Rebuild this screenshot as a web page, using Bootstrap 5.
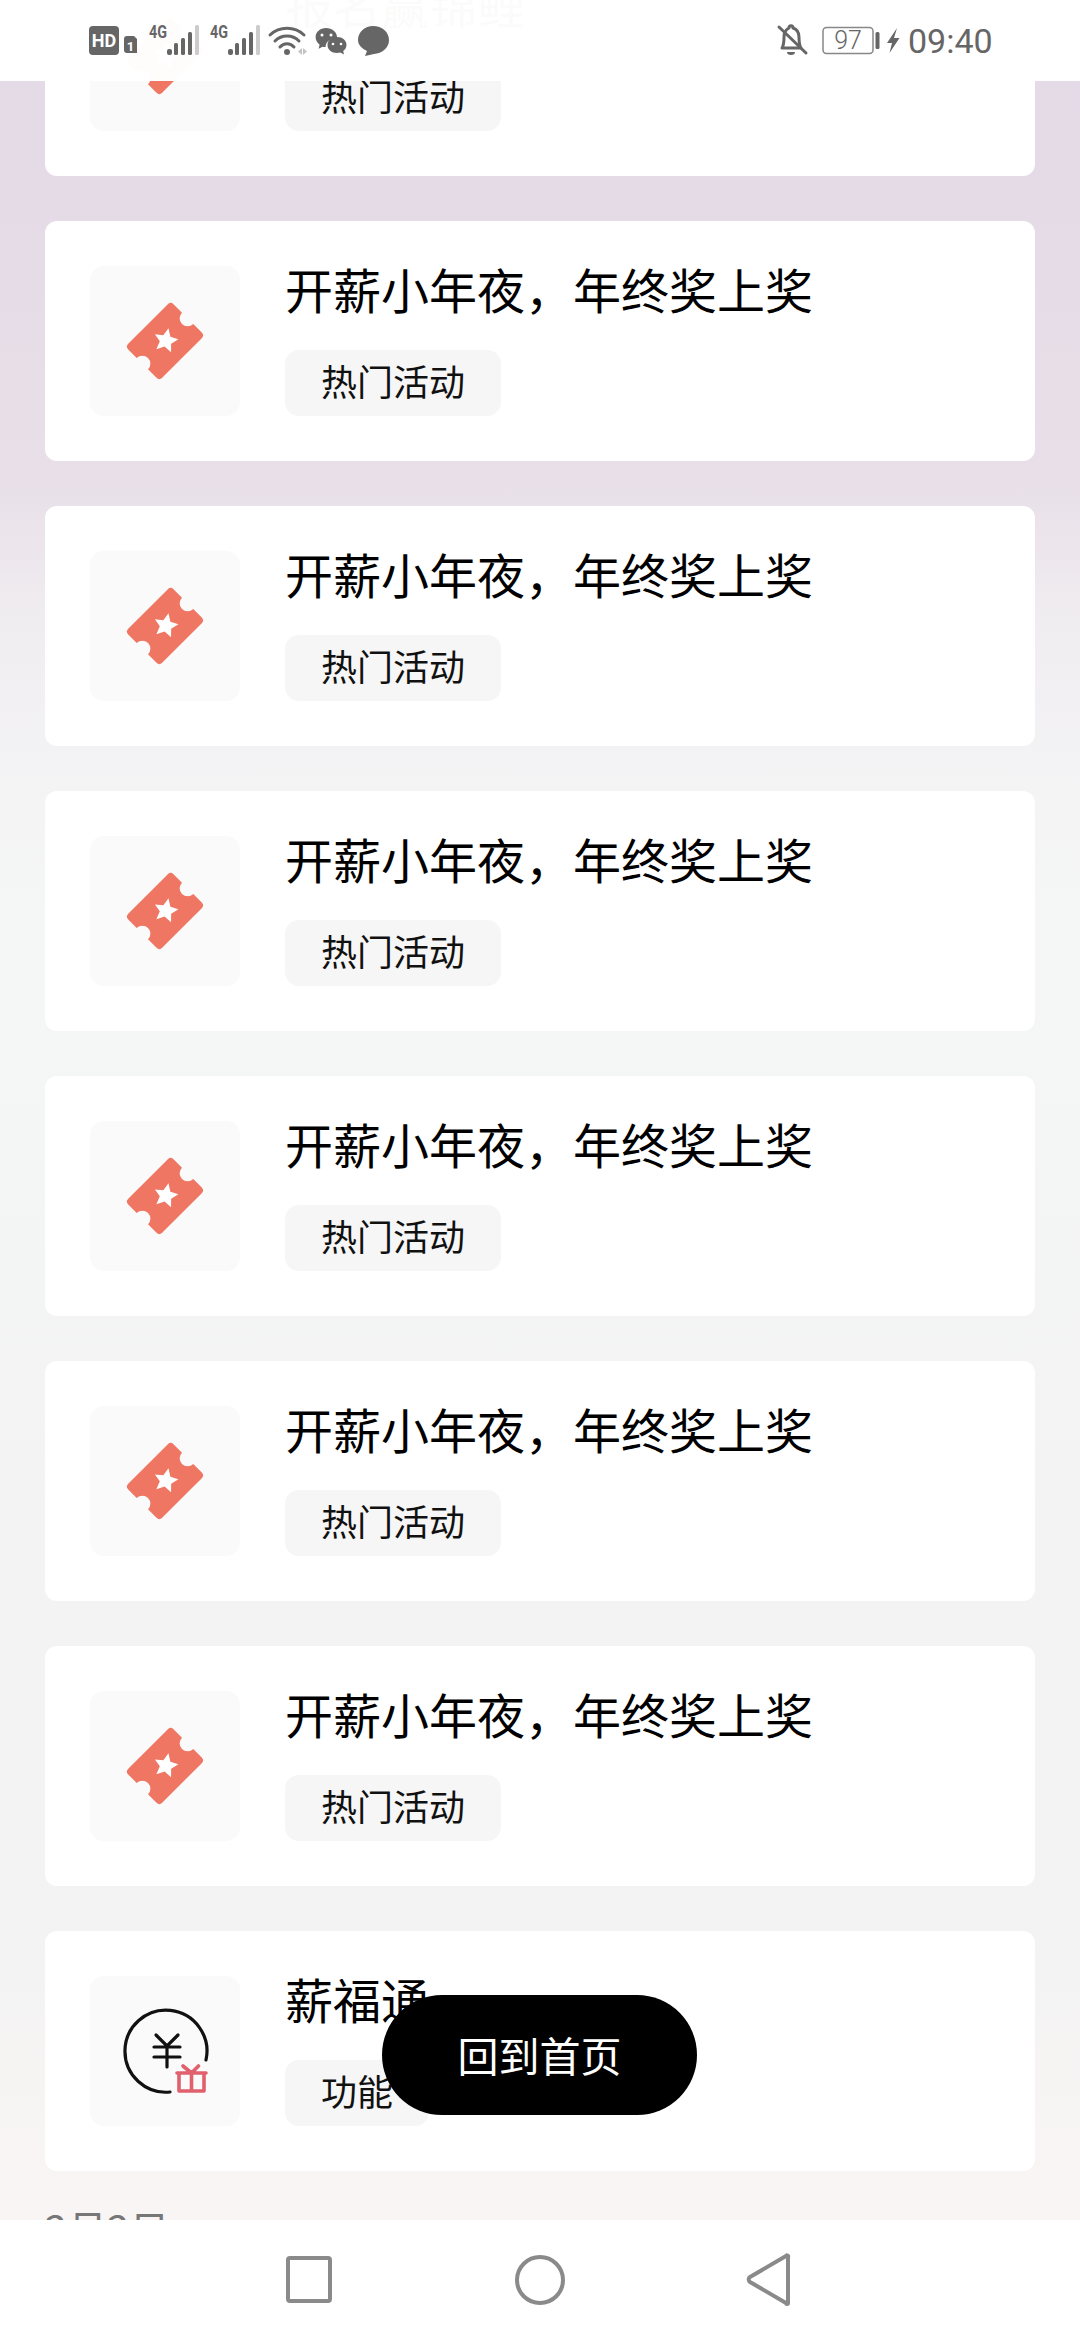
<!DOCTYPE html>
<html lang="zh-CN">
<head>
  <meta charset="UTF-8">
  <title>活动列表</title>
  <link href="https://cdn.jsdelivr.net/npm/bootstrap@5.3.0/dist/css/bootstrap.min.css" rel="stylesheet">
  <style>
    body {
      font-family: "Noto Sans CJK SC", "Liberation Sans", sans-serif;
      background: #f3f3f3;
    }
    .phone {
      position: relative;
      height: 2340px;
      overflow: hidden;
      background: linear-gradient(180deg, #e4dbe8 0, #e5dbe7 200px, #e8dfe8 480px, #f0edf0 620px, #f4f4f5 800px, #f5f6f6 950px, #f3f3f3 1500px, #f3f3f3 1950px, #f9f5f4 2200px, #f9f6f5 2340px);
    }
    .feed {
      margin-top: -64px;
      padding: 0 45px;
      gap: 45px;
    }
    .feed-card {
      height: 240px;
      padding: 45px;
      border: 0;
      border-radius: 12px;
    }
    .thumb {
      width: 150px;
      height: 150px;
      background: #fafafa;
      border-radius: 14px;
      flex: none;
    }
    .feed-body {
      margin-left: 45px;
    }
    .feed-title {
      font-size: 48px;
      line-height: 44px;
      color: #000;
    }
    .feed-tag {
      height: 66px;
      line-height: 60px;
      padding: 0 36px;
      font-size: 36px;
      color: #111;
      background: #f6f6f6;
      border-radius: 14px;
    }
    .feed-date {
      margin-top: -8px;
      font-size: 40px;
      line-height: 40px;
      color: #777;
    }
    .status-strip {
      position: absolute;
      top: 0;
      left: 0;
      width: 100%;
      height: 81px;
      padding-left: 80px;
      padding-right: 60px;
      background: rgba(255, 255, 255, .985);
    }
    .home-btn {
      position: absolute;
      left: 382px;
      top: 1995px;
      width: 315px;
      height: 120px;
      border: 0;
      border-radius: 60px;
      font-size: 41px;
      color: #fff;
      background: #000;
    }
    .nav-strip {
      position: absolute;
      left: 0;
      bottom: 0;
      width: 100%;
      height: 120px;
      background: #fff;
    }
    .sb-text { font-family: Roboto, "Liberation Sans", sans-serif; fill: #666; }
  </style>
</head>
<body>
  <svg width="0" height="0" class="d-block">
    <defs>
      <symbol id="ticket" viewBox="0 0 150 150">
        <g transform="rotate(-45 75 75)">
          <path fill="#ee7662" d="M47 51h56a4 4 0 0 1 4 4v12a8 8 0 0 0 0 16v12a4 4 0 0 1-4 4H47a4 4 0 0 1-4-4V83a8 8 0 0 0 0-16V55a4 4 0 0 1 4-4z"/>
        </g>
        <path fill="#fff" d="M76 62l3.600 7.900 8.400.9-6.200 5.700 1.700 8.500-7.500-4.300-7.500 4.300 1.700-8.500-6.200-5.700 8.400-.9z" transform="rotate(12 76 74)"/>
      </symbol>
    </defs>
  </svg>

  <div class="phone">
    <div class="feed d-flex flex-column">
      <div class="card feed-card flex-row">
        <div class="thumb"><svg width="150" height="150"><use href="#ticket"/></svg></div>
        <div class="feed-body d-flex flex-column align-items-start justify-content-between">
          <div class="feed-title">报名赢锦鲤</div>
          <span class="feed-tag">热门活动</span>
        </div>
      </div>
      <div class="card feed-card flex-row">
        <div class="thumb"><svg width="150" height="150"><use href="#ticket"/></svg></div>
        <div class="feed-body d-flex flex-column align-items-start justify-content-between">
          <div class="feed-title">开薪小年夜，年终奖上奖</div>
          <span class="feed-tag">热门活动</span>
        </div>
      </div>
      <div class="card feed-card flex-row">
        <div class="thumb"><svg width="150" height="150"><use href="#ticket"/></svg></div>
        <div class="feed-body d-flex flex-column align-items-start justify-content-between">
          <div class="feed-title">开薪小年夜，年终奖上奖</div>
          <span class="feed-tag">热门活动</span>
        </div>
      </div>
      <div class="card feed-card flex-row">
        <div class="thumb"><svg width="150" height="150"><use href="#ticket"/></svg></div>
        <div class="feed-body d-flex flex-column align-items-start justify-content-between">
          <div class="feed-title">开薪小年夜，年终奖上奖</div>
          <span class="feed-tag">热门活动</span>
        </div>
      </div>
      <div class="card feed-card flex-row">
        <div class="thumb"><svg width="150" height="150"><use href="#ticket"/></svg></div>
        <div class="feed-body d-flex flex-column align-items-start justify-content-between">
          <div class="feed-title">开薪小年夜，年终奖上奖</div>
          <span class="feed-tag">热门活动</span>
        </div>
      </div>
      <div class="card feed-card flex-row">
        <div class="thumb"><svg width="150" height="150"><use href="#ticket"/></svg></div>
        <div class="feed-body d-flex flex-column align-items-start justify-content-between">
          <div class="feed-title">开薪小年夜，年终奖上奖</div>
          <span class="feed-tag">热门活动</span>
        </div>
      </div>
      <div class="card feed-card flex-row">
        <div class="thumb"><svg width="150" height="150"><use href="#ticket"/></svg></div>
        <div class="feed-body d-flex flex-column align-items-start justify-content-between">
          <div class="feed-title">开薪小年夜，年终奖上奖</div>
          <span class="feed-tag">热门活动</span>
        </div>
      </div>
      <div class="card feed-card flex-row">
        <div class="thumb">
          <svg width="150" height="150" viewBox="0 0 150 150" fill="none">
            <path d="M116 84A41 41 0 1 0 80 116" stroke="#111" stroke-width="3.200" stroke-linecap="round"/>
            <path d="M66 59l11 11 11-11M64 71h26M64 81h26M77 70v21" stroke="#111" stroke-width="3.200" stroke-linecap="round"/>
            <path d="M87 97h29M89 97v18h25V97M101.500 97v18M93 90l8.500 7 7-7" stroke="#e0606e" stroke-width="3.600" stroke-linecap="round" stroke-linejoin="round"/>
          </svg>
        </div>
        <div class="feed-body d-flex flex-column align-items-start justify-content-between">
          <div class="feed-title">薪福通</div>
          <span class="feed-tag">功能</span>
        </div>
      </div>
      <div class="feed-date">2月2日</div>
    </div>

    <button type="button" class="btn home-btn p-0">回到首页</button>

    <div class="status-strip d-flex justify-content-between">
      <svg width="320" height="80" viewBox="80 0 320 80">
        <rect x="89" y="26" width="30" height="29" rx="4" fill="#666"/>
        <text x="104" y="47" text-anchor="middle" font-size="18" font-weight="700" fill="#fff" font-family="Roboto, sans-serif">HD</text>
        <path d="M127 36h7l3 3v14h-10a3 3 0 0 1-3-3V39a3 3 0 0 1 3-3z" fill="#666"/>
        <text x="130.500" y="51" text-anchor="middle" font-size="13" font-weight="700" fill="#fff" font-family="Roboto, sans-serif">1</text>
        <g>
          <text x="149" y="38" font-size="18" font-weight="700" textLength="18" lengthAdjust="spacingAndGlyphs" class="sb-text">4G</text>
          <rect x="167" y="49" width="5" height="6" rx="2" fill="#666"/>
          <rect x="174" y="43" width="4" height="12" rx="1.500" fill="#666"/>
          <rect x="181" y="38" width="4" height="17" rx="1.500" fill="#666"/>
          <rect x="188" y="32" width="4" height="23" rx="1.500" fill="#666"/>
          <rect x="195" y="25" width="4" height="30" rx="1.500" fill="#ccc"/>
        </g>
        <g transform="translate(61 0)">
          <text x="149" y="38" font-size="18" font-weight="700" textLength="18" lengthAdjust="spacingAndGlyphs" class="sb-text">4G</text>
          <rect x="167" y="49" width="5" height="6" rx="2" fill="#666"/>
          <rect x="174" y="43" width="4" height="12" rx="1.500" fill="#666"/>
          <rect x="181" y="38" width="4" height="17" rx="1.500" fill="#666"/>
          <rect x="188" y="32" width="4" height="23" rx="1.500" fill="#666"/>
          <rect x="195" y="25" width="4" height="30" rx="1.500" fill="#ccc"/>
        </g>
        <g fill="none" stroke="#666" stroke-width="3" stroke-linecap="round">
          <path d="M270 35a25 25 0 0 1 34 0M275 41a17 17 0 0 1 24 0M280 47a9 9 0 0 1 14 0"/>
        </g>
        <circle cx="287" cy="52" r="3" fill="#666"/>
        <path d="M302 48v7l-4-3.500zM303 48v7l4-3.500z" fill="#c4c4c4"/>
        <path d="M326 28c6 0 11 4 11 9 0 1-.200 1.500-.400 2-5-1-11 2-11 8-1 0-2 0-3-.300l-4 2 1-4c-2.500-2-4-4.500-4-7.700 0-5 4.500-9 10.400-9z" fill="#666"/>
        <path d="M337 37c5.500 0 9.500 3.500 9.500 8 0 2.500-1.300 4.500-3.300 6l.8 3.500-3.600-2c-1 .200-2.300.400-3.400.400-5.500 0-9.500-3.500-9.500-8s4-7.900 9.500-7.900z" fill="#666"/>
        <circle cx="322" cy="35" r="1.500" fill="#fff"/><circle cx="331" cy="35" r="1.500" fill="#fff"/>
        <circle cx="333" cy="44" r="1.300" fill="#fff"/><circle cx="341" cy="44" r="1.300" fill="#fff"/>
        <path d="M373 26c9 0 16 6 16 14s-7 13.500-15 14l-9 2 2-5c-5-2.500-9-6-9-11 0-8 7-14 15-14z" fill="#666"/>
      </svg>
      <svg width="260" height="80" viewBox="760 0 260 80">
        <path d="M782 48c2-3 2-6 2-11 0-5 3-8 5-9 0-3 4-3 4 0 3 1 6 4 6 9 0 5 0 8 2 11z" fill="none" stroke="#666" stroke-width="3" stroke-linejoin="round"/>
        <path d="M787 52a4 3 0 0 0 8 0z" fill="#666"/>
        <path d="M779 27l27 26" stroke="#666" stroke-width="3" stroke-linecap="round"/>
        <rect x="823" y="27.500" width="50" height="26" rx="3.500" fill="none" stroke="#888" stroke-width="1.500"/>
        <text x="848" y="49" text-anchor="middle" font-size="25" font-weight="300" class="sb-text">97</text>
        <rect x="875.500" y="32" width="4" height="17" rx="1.500" fill="#666"/>
        <path d="M897 28l-10 15h5l-2.500 10 10-15h-5.500z" fill="#666"/>
        <text x="908" y="53" font-size="34" class="sb-text">09:40</text>
      </svg>
    </div>

    <div class="nav-strip">
      <svg width="1080" height="120" viewBox="0 0 1080 120" fill="none" stroke="#8a8a8a" stroke-width="4">
        <rect x="288" y="38" width="42" height="43" rx="2"/>
        <circle cx="540" cy="60" r="23"/>
        <path d="M788 37v46a1 1 0 0 1-2 0L750 62a3 3 0 0 1 0-5l36-21a1 1 0 0 1 2 1z" stroke-linejoin="round"/>
      </svg>
    </div>
  </div>
  <script src="https://cdn.jsdelivr.net/npm/bootstrap@5.3.0/dist/js/bootstrap.bundle.min.js"></script>
</body>
</html>
